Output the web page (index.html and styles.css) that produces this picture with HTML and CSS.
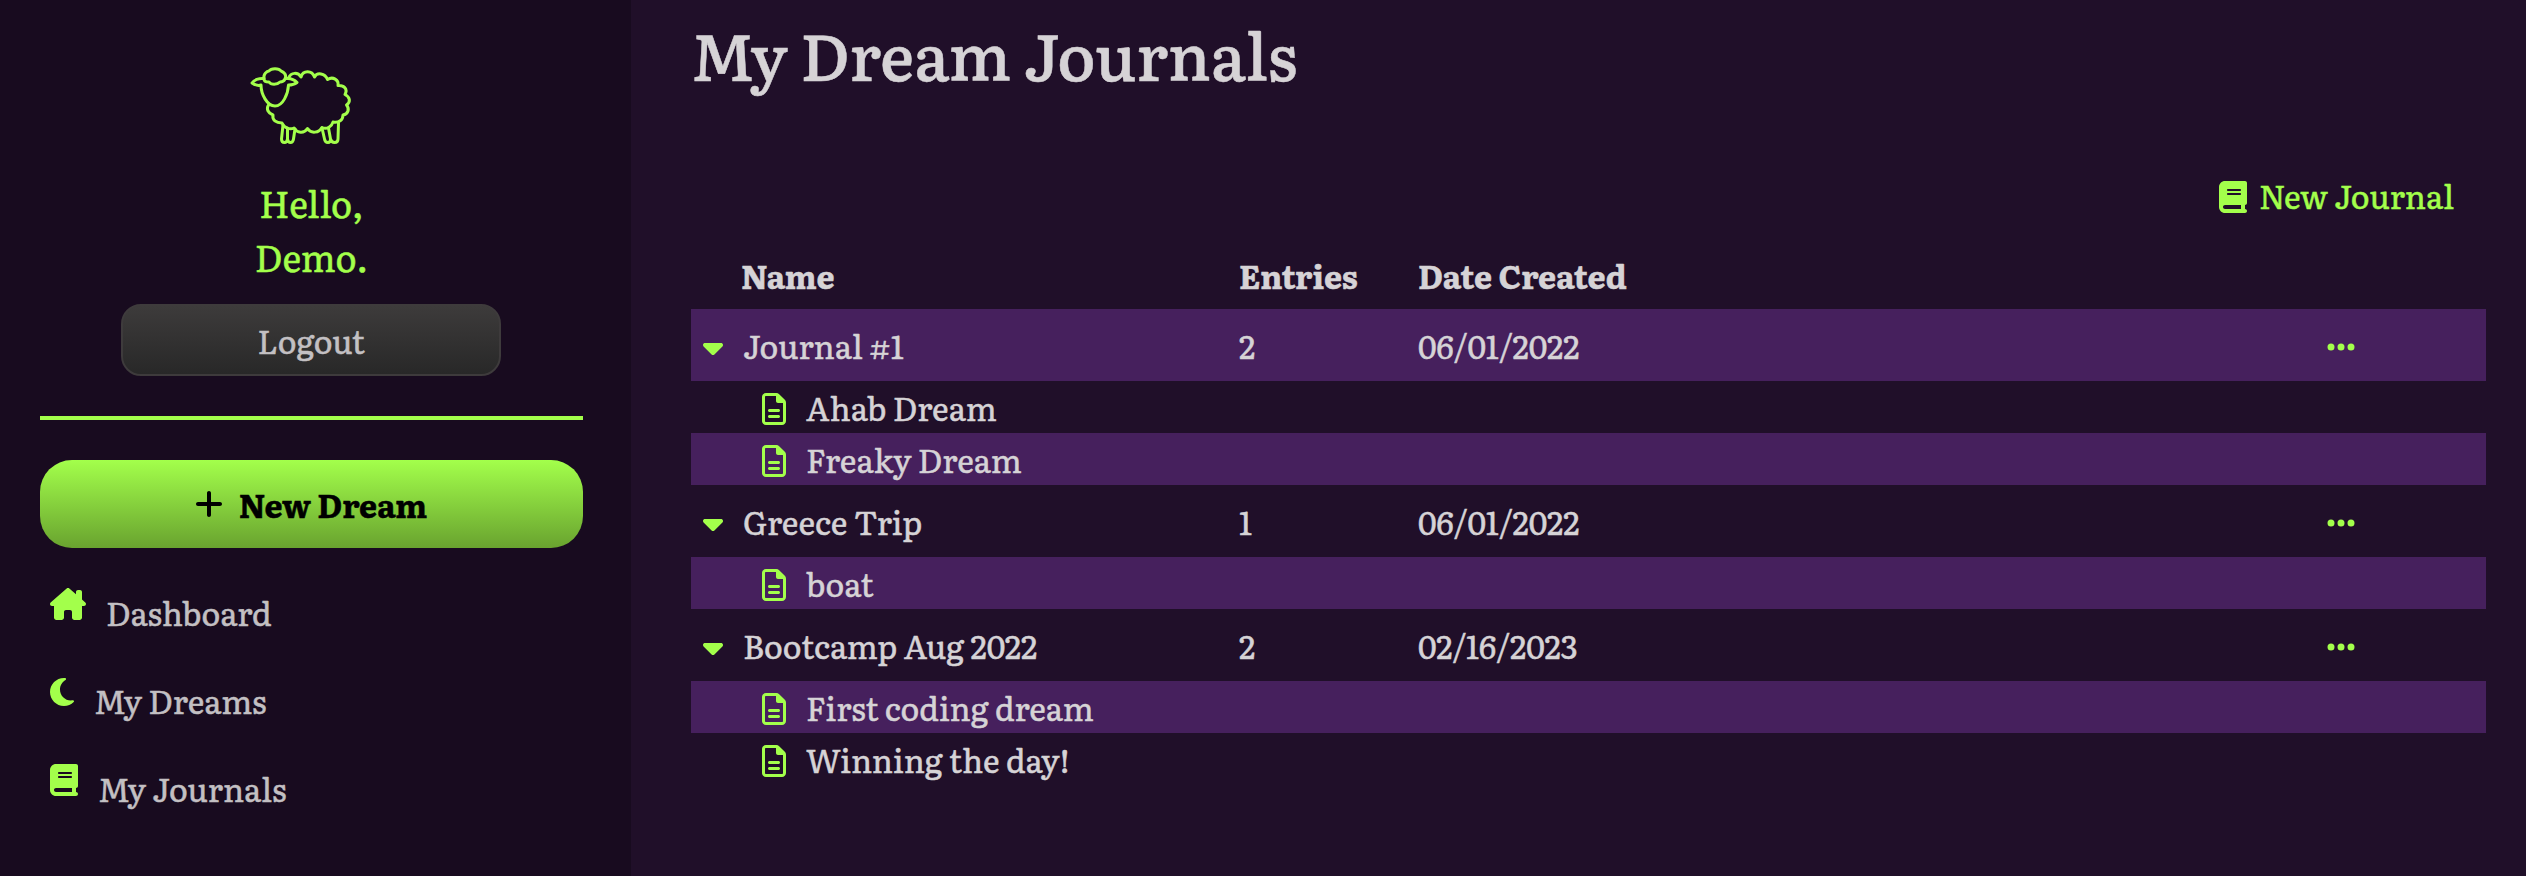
FILE: index.html
```html
<!DOCTYPE html>
<html lang="en">
<head>
<meta charset="utf-8">
<title>My Dream Journals</title>
<link rel="stylesheet" href="styles.css">
</head>
<body>
<svg class="sprite" aria-hidden="true">
  <symbol id="book" viewBox="0 0 448 512"><path d="M96 0C43 0 0 43 0 96V416c0 53 43 96 96 96H384h32c17.700 0 32-14.300 32-32s-14.300-32-32-32V384c17.700 0 32-14.300 32-32V32c0-17.700-14.300-32-32-32H384 96zm0 384H352v64H96c-17.700 0-32-14.300-32-32s14.300-32 32-32zm32-240c0-8.800 7.200-16 16-16H336c8.800 0 16 7.200 16 16s-7.200 16-16 16H144c-8.800 0-16-7.200-16-16zm16 48H336c8.800 0 16 7.200 16 16s-7.200 16-16 16H144c-8.800 0-16-7.200-16-16s7.200-16 16-16z"/></symbol>
  <symbol id="house" viewBox="0 0 576 512"><path d="M575.800 255.500c0 18-15 32.100-32 32.100h-32l.7 160.200c0 2.700-.2 5.400-.5 8.100V472c0 22.100-17.900 40-40 40H456c-1.100 0-2.200 0-3.300-.1c-1.400 .1-2.800 .1-4.200 .1H416 392c-22.100 0-40-17.900-40-40V448 384c0-17.700-14.300-32-32-32H256c-17.700 0-32 14.300-32 32v64 24c0 22.100-17.900 40-40 40H160 128.100c-1.500 0-3-.1-4.500-.2c-1.200 .1-2.400 .2-3.600 .2H104c-22.100 0-40-17.900-40-40V360c0-.9 0-1.900 .1-2.800V287.600H32c-18 0-32-14-32-32.100c0-9 3-17 10-24L266.400 8c7-7 15-8 22-8s15 2 21 7L416 100.700V64c0-17.700 14.300-32 32-32h32c17.700 0 32 14.300 32 32V185l52.800 46.400c8 7 12 15 11 24z"/></symbol>
  <symbol id="moon" viewBox="0 0 384 512"><path d="M223.500 32C100 32 0 132.300 0 256S100 480 223.500 480c60.600 0 115.500-24.200 155.800-63.400c5-4.900 6.300-12.500 3.100-18.700s-10.100-9.700-17-8.500c-9.800 1.700-19.800 2.600-30.100 2.600c-96.900 0-175.500-78.800-175.500-176c0-65.800 36-123.100 89.300-153.300c6.100-3.500 9.200-10.500 7.700-17.300s-7.300-11.900-14.300-12.500c-6.300-.5-12.600-.8-19-.8z"/></symbol>
  <symbol id="plus" viewBox="0 0 448 512"><path d="M256 80c0-17.700-14.300-32-32-32s-32 14.300-32 32V224H48c-17.700 0-32 14.300-32 32s14.300 32 32 32H192V432c0 17.700 14.300 32 32 32s32-14.300 32-32V288H400c17.700 0 32-14.300 32-32s-14.300-32-32-32H256V80z"/></symbol>
  <symbol id="caret" viewBox="0 0 320 512"><path d="M137.400 374.600c12.500 12.500 32.800 12.500 45.300 0l128-128c9.200-9.200 11.900-22.900 6.900-34.900s-16.600-19.800-29.600-19.800L32 192c-12.900 0-24.600 7.800-29.600 19.800s-2.200 25.700 6.900 34.900l128 128z"/></symbol>
  <symbol id="file" viewBox="0 0 384 512"><path d="M64 464c-8.800 0-16-7.200-16-16V64c0-8.800 7.200-16 16-16H224v80c0 17.700 14.300 32 32 32h80V448c0 8.800-7.200 16-16 16H64zM64 0C28.700 0 0 28.700 0 64V448c0 35.300 28.700 64 64 64H320c35.300 0 64-28.700 64-64V154.500c0-17-6.700-33.300-18.700-45.300L274.700 18.700C262.700 6.700 246.500 0 229.500 0H64zm56 256c-13.300 0-24 10.700-24 24s10.700 24 24 24H264c13.300 0 24-10.700 24-24s-10.700-24-24-24H120zm0 96c-13.300 0-24 10.700-24 24s10.700 24 24 24H264c13.300 0 24-10.700 24-24s-10.700-24-24-24H120z"/></symbol>
  <symbol id="dots" viewBox="0 0 448 512"><path d="M8 256a56 56 0 1 1 112 0A56 56 0 1 1 8 256zm160 0a56 56 0 1 1 112 0 56 56 0 1 1 -112 0zm216-56a56 56 0 1 1 0 112 56 56 0 1 1 0-112z"/></symbol>
</svg>
<div class="app">
  <aside class="sidebar">
    <svg class="sheep" viewBox="0 0 150 110">
      <path d="M34 29C33 24 37 21 39 21C41 18 49 18 51 21C54 22 57 25 55 29C54 31 52 32 50 32C47 35 41 35 39 32C36 32 34 31 34 29Z"/>
      <path d="M34 28.500C29 28 24 30 22 33C25 35 28 36 31 35C31 44 37 56 45 56C53 56 58 44 58.500 35C62 35 65 34 67 32.500C64 29 60 28 55.500 28.500"/>
      <path d="M58.500 28C61 22 68 22 71 27C73 20 82 20 84.500 27C87 22 95 23 97.500 29.500C103 26 109 30 108 35.500C114 35 118 39 115 44.500C120 47 121 52 116.500 55C120 59 118 64 113 65C113 70 109 73 103 72C102 76 97 80 92 77.500C89 83 81 84 77.500 78.500C74 84 67 83 64 78C60 80 54 78 52 73C46 73 42 70 43 65C38 63 36 59 38.500 55"/>
      <path d="M53 75L51.500 89Q51.500 92.500 54.500 92.500Q57 92.500 57.500 89L57.500 78M57.500 89Q58 92.500 60.500 92.500Q63 92.500 63.500 89L65 79"/>
      <path d="M92 78L94.500 89Q95 92.500 98 92.500Q100.500 92.500 100.500 89L98.500 78M100.500 89Q101.500 92.500 104.500 92.500Q108 92.500 108 89L108.500 73"/>
    </svg>
    <div class="greeting">Hello,<br>Demo.</div>
    <button class="logout">Logout</button>
    <div class="divider"></div>
    <button class="new-dream"><svg class="icon icon-plus"><use href="#plus"/></svg>New Dream</button>
    <nav class="nav">
      <a class="nav-item"><svg class="icon icon-house"><use href="#house"/></svg><span class="nav-label">Dashboard</span></a>
      <a class="nav-item"><svg class="icon icon-moon"><use href="#moon"/></svg><span class="nav-label">My Dreams</span></a>
      <a class="nav-item"><svg class="icon icon-book"><use href="#book"/></svg><span class="nav-label">My Journals</span></a>
    </nav>
  </aside>
  <main class="main">
    <h1 class="title">My Dream Journals</h1>
    <div class="toolbar"><a class="new-journal"><svg class="icon icon-book"><use href="#book"/></svg>New Journal</a></div>
    <div class="table">
      <div class="row head"><span></span><span class="head-name">Name</span><span>Entries</span><span>Date Created</span></div>
      <div class="row journal shaded"><svg class="icon icon-caret"><use href="#caret"/></svg><span>Journal #1</span><span>2</span><span>06/01/2022</span><svg class="icon icon-dots"><use href="#dots"/></svg></div>
      <div class="entry"><svg class="icon icon-file"><use href="#file"/></svg>Ahab Dream</div>
      <div class="entry shaded"><svg class="icon icon-file"><use href="#file"/></svg>Freaky Dream</div>
      <div class="row journal"><svg class="icon icon-caret"><use href="#caret"/></svg><span>Greece Trip</span><span>1</span><span>06/01/2022</span><svg class="icon icon-dots"><use href="#dots"/></svg></div>
      <div class="entry shaded"><svg class="icon icon-file"><use href="#file"/></svg>boat</div>
      <div class="row journal"><svg class="icon icon-caret"><use href="#caret"/></svg><span>Bootcamp Aug 2022</span><span>2</span><span>02/16/2023</span><svg class="icon icon-dots"><use href="#dots"/></svg></div>
      <div class="entry shaded"><svg class="icon icon-file"><use href="#file"/></svg>First coding dream</div>
      <div class="entry"><svg class="icon icon-file"><use href="#file"/></svg>Winning the day!</div>
    </div>
  </main>
</div>
</body>
</html>
```
FILE: styles.css
```css
* { box-sizing: border-box; }
body {
  margin: 0;
  background: #200f29;
  color: #d6d3d6;
  font: 32px/48px "Literata", "Noto Serif", "DejaVu Serif", serif;
  -webkit-text-stroke: 0.5px currentColor;
}
.sprite { display: none; }
.app { display: flex; height: 876px; overflow: hidden; }
.icon { display: block; flex: none; height: 32px; fill: #a3ff4b; }
.icon-book, .icon-plus, .icon-dots { width: 28px; }
.icon-house { width: 36px; }
.icon-moon, .icon-file { width: 24px; }
.icon-caret { width: 20px; }

/* Sidebar */
.sidebar {
  display: flex;
  flex-direction: column;
  align-items: center;
  width: 631px;
  flex: none;
  padding: 50px 48px 0 40px;
  background: #180b1f;
}
.sheep {
  width: 150px;
  height: 110px;
  margin-right: 13px;
  fill: none;
  stroke: #a3ff4b;
  stroke-width: 3;
  stroke-linecap: round;
  stroke-linejoin: round;
}
.greeting {
  margin-top: 16px;
  color: #a3ff4b;
  font-size: 36px;
  line-height: 54px;
  text-align: center;
}
.logout {
  width: 380px;
  height: 72px;
  margin: 20px 1px 0 0;
  padding: 0;
  border: 2px solid #3e3b3c;
  border-radius: 20px;
  background: linear-gradient(#3d3b3b, #282828);
  color: #c3c0c3;
  font: inherit;
  -webkit-text-stroke: inherit;
}
.divider { width: 543px; height: 4px; margin-top: 40px; background: #a3ff4b; }
.new-dream {
  display: flex;
  align-items: center;
  justify-content: center;
  gap: 16px;
  width: 543px;
  height: 88px;
  margin-top: 40px;
  padding: 0 1px 0 0;
  border: 0;
  border-radius: 32px;
  background: linear-gradient(#a3ff4b, #69a32f);
  color: #000;
  font: inherit;
  font-weight: 700;
}
.new-dream .icon { fill: #000; }
.nav {
  display: flex;
  flex-direction: column;
  gap: 40px;
  align-self: stretch;
  margin-top: 40px;
  padding-left: 10px;
}
.nav-item { display: flex; gap: 20px; height: 48px; color: #c3c0c3; }
.nav-label { line-height: 48px; }

/* Main */
.main { flex: 1; padding: 6px 40px 0 60px; }
.title { margin: 0; font-size: 64px; font-weight: 500; line-height: 96px; letter-spacing: -0.15px; }
.toolbar { display: flex; justify-content: flex-end; margin-top: 69px; padding-right: 32px; }
.new-journal { display: flex; align-items: center; gap: 12px; color: #a3ff4b; }
.new-journal .icon { margin-top: 4px; }
.table { margin-top: 22px; }
.row {
  display: grid;
  grid-template-columns: 52px 496px 179px 909px 28px;
  align-items: center;
}
.head { height: 68px; font-weight: 700; }
.head-name { margin-left: -2px; }
.journal { height: 72px; }
.journal .icon { margin-top: 4px; }
.journal .icon-caret { margin-left: 12px; }
.entry { display: flex; align-items: center; gap: 20px; height: 52px; padding-left: 71px; }
.entry .icon { margin-top: 4px; }
.shaded { background: #46205d; }
```
